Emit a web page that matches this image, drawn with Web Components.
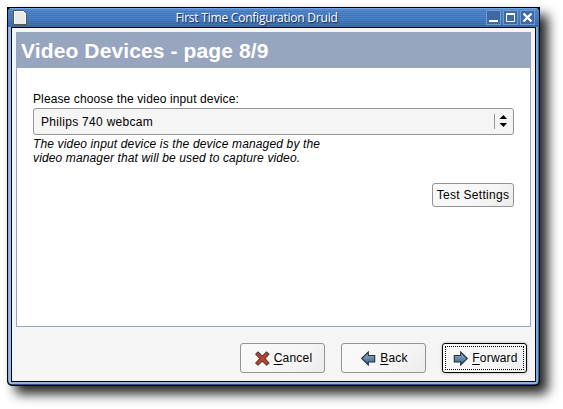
<!DOCTYPE html>
<html lang="en">
<head>
<meta charset="utf-8">
<title>First Time Configuration Druid</title>
<style>
html,body{margin:0;background:#fff;overflow:hidden}
body{width:563px;height:409px;font:12px/14px "Liberation Sans",Arial,sans-serif;color:#000;box-sizing:border-box;padding:7px}
</style>
</head>
<body>
<druid-window caption="First Time Configuration Druid">
  <druid-page heading="Video Devices - page 8/9">
    <device-choice label="Please choose the video input device:" value="Philips 740 webcam">
      <span>The video input device is the device managed by the</span>
      <span style="letter-spacing:.13px">video manager that will be used to capture video.</span>
    </device-choice>
    <push-button slot="action" class="small" style="--w:82px;--h:24px;--ls:.3px">Test Settings</push-button>
  </druid-page>
  <push-button slot="buttons" icon="cancel"><u>C</u>ancel</push-button>
  <push-button slot="buttons" icon="back"><u>B</u>ack</push-button>
  <push-button slot="buttons" icon="forward" focused><u>F</u>orward</push-button>
</druid-window>
<script>
class Base extends HTMLElement{
  constructor(){super();this.attachShadow({mode:'open'});}
  connectedCallback(){this.shadowRoot.innerHTML=this.view();}
}
customElements.define('druid-window',class extends Base{
  view(){return `<style>
  :host{display:flex;flex-direction:column;box-sizing:border-box;width:533px;height:379px;background:#000;padding:1px;border-radius:0 0 5px 5px;
    box-shadow:8px 8px 12px rgba(0,0,0,.85)}
  .frame{flex:1;display:flex;flex-direction:column;border-radius:4px 4px 5px 5px;overflow:hidden;
    background:linear-gradient(90deg,#85aee0 0 1px,#9abde9 1px 3px,transparent 3px calc(100% - 3px),#7eaae0 calc(100% - 3px) calc(100% - 1px),#37619d calc(100% - 1px)),linear-gradient(#8fb4e4 0 calc(100% - 1px),#2c5390 calc(100% - 1px))}
  header{height:19px;display:flex;align-items:center;box-sizing:border-box;padding:0 4px 0 5px;
    background:repeating-linear-gradient(rgba(0,0,0,0) 0 1px,rgba(10,35,85,.15) 1px 2px),linear-gradient(#76a6e5 0 1px,#5089d0 2px,#4a80c5 60%,#3c6cad)}
  .side{display:flex;width:14px}.right{width:49px;justify-content:flex-end;gap:2px}
  h1{flex:1;margin:0;text-align:center;font:12px/17px "Open Sans","Noto Sans",sans-serif;color:#fff;text-shadow:1px 1px 1px #142b50;letter-spacing:-.22px;white-space:nowrap}
  .body{flex:1;display:flex;flex-direction:column;box-sizing:border-box;border:1px solid #000;margin:0 3px 3px;background:#f5f5f5;padding:4px 4px 0}
  .side svg{display:block}
  nav{display:flex;justify-content:flex-end;gap:16px;padding:16px 4px 0}
  </style><div class="frame"><header><div class="side"><svg width="14" height="15" viewBox="0 0 14 15"><path d="M.5 .5H10.5L13.5 3.5V14.5H.5Z" fill="#e9e9e6" stroke="#57564f"/><path d="M1.5 13.5V1.5H10L12.5 4V13" fill="none" stroke="#fff"/></svg></div>
  <h1>${this.getAttribute('caption')}</h1>
  <div class="side right">${['<path d="M3 11H12" stroke-width="2"/>','<path d="M3.5 4H11.5V11.5H3.5Z" stroke-width="1"/><path d="M3 4H12" stroke-width="2"/>','<path d="M3.5 3.5L11.5 11.5M11.5 3.5L3.5 11.5" stroke-width="2.3"/>'].map(p=>`<svg width="15" height="15" viewBox="0 0 15 15"><rect x=".5" y=".5" width="14" height="14" fill="#3f69a5" stroke="#6f9cd8"/><g fill="none" stroke="#fff">${p}</g></svg>`).join('')}</div></header>
  <div class="body"><slot></slot><nav><slot name="buttons"></slot></nav></div></div>`}
});
customElements.define('druid-page',class extends Base{
  view(){return `<style>
  :host{display:block;box-sizing:border-box;height:295px;border:1px solid #98a5bf;background:#fff}
  h2{margin:0;height:35px;box-sizing:border-box;padding:6px 0 0 4px;background:#98a5bf;color:#fff;font:bold 21px/23px "Liberation Sans",Arial,sans-serif;letter-spacing:.12px}
  main{display:flex;flex-direction:column;padding:24px 16px 0}
  .act{display:flex;justify-content:flex-end;padding-top:18px}
  </style><h2>${this.getAttribute('heading')}</h2><main><slot></slot><div class="act"><slot name="action"></slot></div></main>`}
});
customElements.define('device-choice',class extends Base{
  view(){return `<style>
  :host{display:flex;flex-direction:column}
  label{height:16px;line-height:14px;letter-spacing:.12px}
  .combo{height:27px;box-sizing:border-box;border:1px solid #949494;border-radius:3px;background:#f5f5f5;display:flex;align-items:center;padding:0 6px 0 7px;letter-spacing:.3px}
  .combo span{flex:1}
  .tip{display:flex;flex-direction:column;font-style:italic;padding-top:2px;letter-spacing:.15px}
  svg{display:block}
  </style><label>${this.getAttribute('label')}</label><div class="combo"><span>${this.getAttribute('value')}</span>
  <svg width="13" height="15" viewBox="0 0 13 15"><path d="M.5 0V15" stroke="#949494"/><path d="M5.5 5L9.5 1L13 5ZM5.5 9H13L9.5 13Z"/></svg></div><div class="tip"><slot></slot></div>`}
});
const icons={
 cancel:`<svg width="15" height="15" viewBox="0 0 15 15"><path d="M3 1L7.3 5.2L11.6 1L14 3.2L10 7.6L14 12L11.6 14.2L7.3 10.1L3 14.2L.7 12L4.8 7.6L.7 3.2Z" fill="#c2402b" stroke="#55443f" stroke-width="1.1" stroke-linejoin="round"/></svg>`,
 back:`<svg width="15" height="15" viewBox="0 0 15 15"><defs><linearGradient id="g" x2="0" y2="1"><stop stop-color="#9abbd4"/><stop offset="1" stop-color="#315984"/></linearGradient></defs><path d="M.7 7.5L7.3 1V4.5H13.7V11H7.3V14Z" fill="url(#g)" stroke="#22303f" stroke-width="1.1"/></svg>`
};
icons.forward=icons.back.replace('<svg','<svg style="transform:scaleX(-1)"');
customElements.define('push-button',class extends Base{
  view(){const i=this.getAttribute('icon');return `<style>
  :host{display:flex;align-items:center;justify-content:center;gap:4px;box-sizing:border-box;width:var(--w,85px);height:var(--h,30px);border:1px solid #949494;border-radius:3px;
   background:linear-gradient(135deg,#fafafa 0,#f5f5f5 65%,#ececec);letter-spacing:var(--ls,.2px);position:relative;white-space:nowrap}
  :host([icon]){padding-left:2px}
  :host([focused]){border-color:#000;box-shadow:0 0 3px #aaa}
  :host([focused])::after{content:"";position:absolute;inset:2px;border:1px dotted #000}
  svg{display:block}
  ::slotted(u){text-underline-offset:2px;text-decoration-thickness:1px}
  </style>${i?icons[i]:''}<span><slot></slot></span>`}
});
</script>
</body>
</html>
